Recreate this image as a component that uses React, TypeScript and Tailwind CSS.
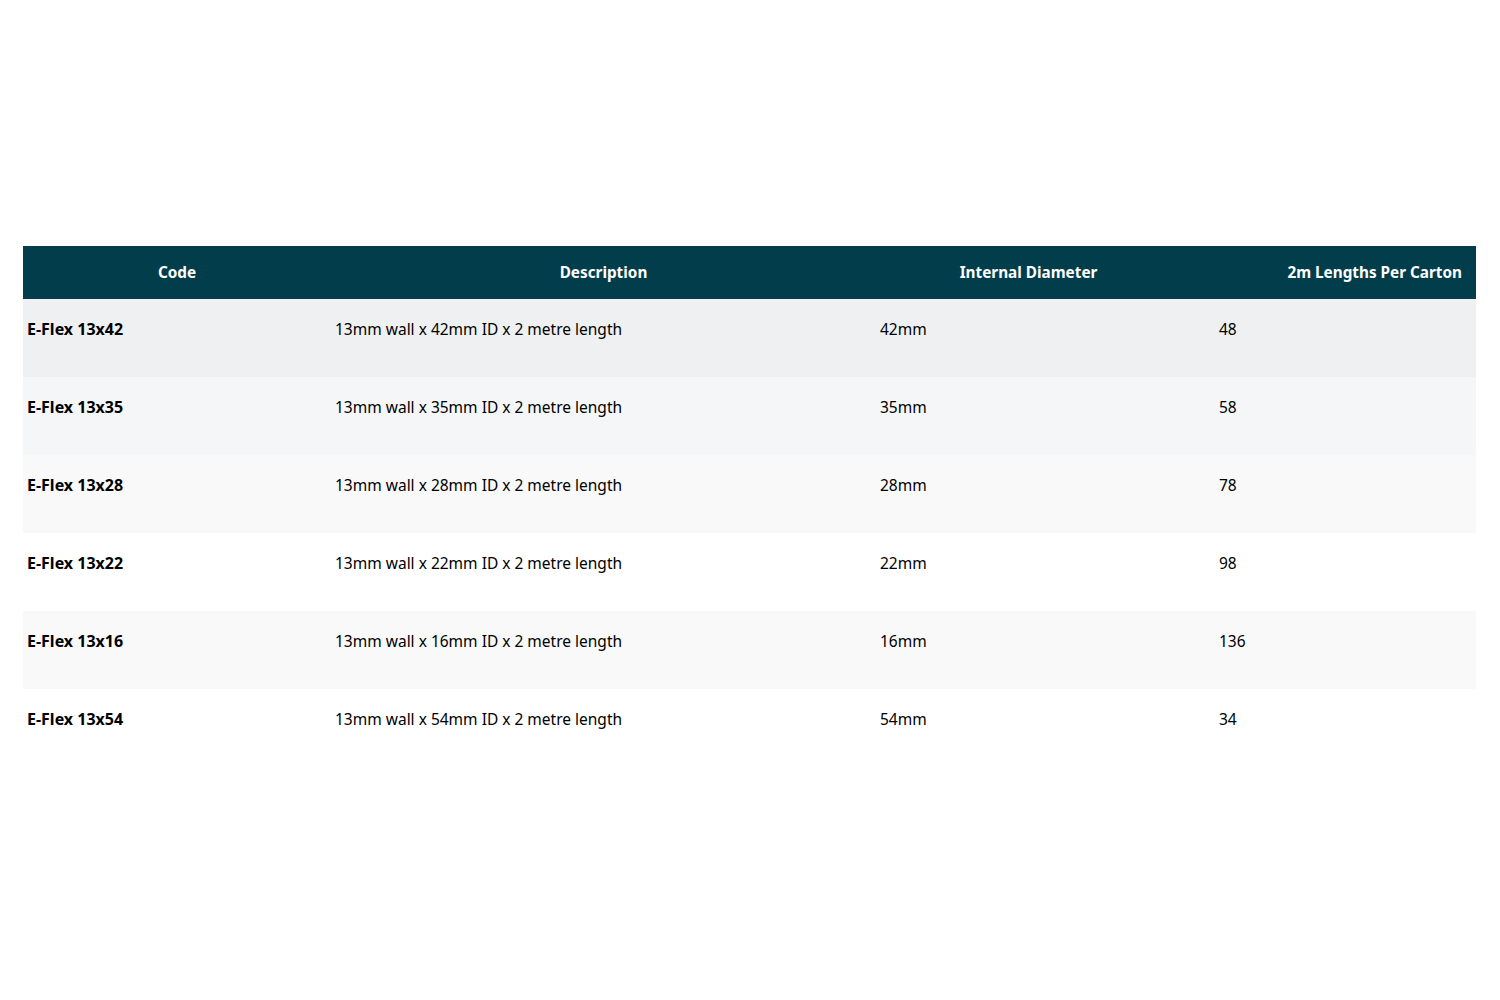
import React from "react";

const rows = [
  { code: "E-Flex 13x42", desc: "13mm wall x 42mm ID x 2 metre length", id: "42mm", qty: "48", bg: "bg-[#eff0f2]" },
  { code: "E-Flex 13x35", desc: "13mm wall x 35mm ID x 2 metre length", id: "35mm", qty: "58", bg: "bg-[#f5f6f7]" },
  { code: "E-Flex 13x28", desc: "13mm wall x 28mm ID x 2 metre length", id: "28mm", qty: "78", bg: "bg-[#f9f9f9]" },
  { code: "E-Flex 13x22", desc: "13mm wall x 22mm ID x 2 metre length", id: "22mm", qty: "98", bg: "bg-white" },
  { code: "E-Flex 13x16", desc: "13mm wall x 16mm ID x 2 metre length", id: "16mm", qty: "136", bg: "bg-[#f9f9f9]" },
  { code: "E-Flex 13x54", desc: "13mm wall x 54mm ID x 2 metre length", id: "54mm", qty: "34", bg: "bg-white" },
];

export default function App() {
  return (
    <div className="w-[1500px] h-[1000px] bg-white pt-[246px] px-[23px] text-black [font-family:'Noto_Sans','Open_Sans',sans-serif]">
      <div className="w-[1453px]">
        <div className="flex h-[53px] items-center pb-[2px] bg-[#023d4b] text-white font-bold text-[15.3px] leading-[20px]">
          <div className="w-[308px] text-center">Code</div>
          <div className="w-[545px] text-center">Description</div>
          <div className="w-[305px] text-center">Internal Diameter</div>
          <div className="flex-1 text-right pr-[14px]">2m Lengths Per Carton</div>
        </div>
        {rows.map((r) => (
          <div key={r.code} className={`flex h-[78px] pt-[19px] text-[15.5px] leading-[22px] ${r.bg}`}>
            <div className="w-[308px] pl-[4px] font-bold text-[16px]">{r.code}</div>
            <div className="w-[545px] pl-[4px]">{r.desc}</div>
            <div className="w-[339px] pl-[4px]">{r.id}</div>
            <div className="flex-1 pl-[4px]">{r.qty}</div>
          </div>
        ))}
      </div>
    </div>
  );
}
